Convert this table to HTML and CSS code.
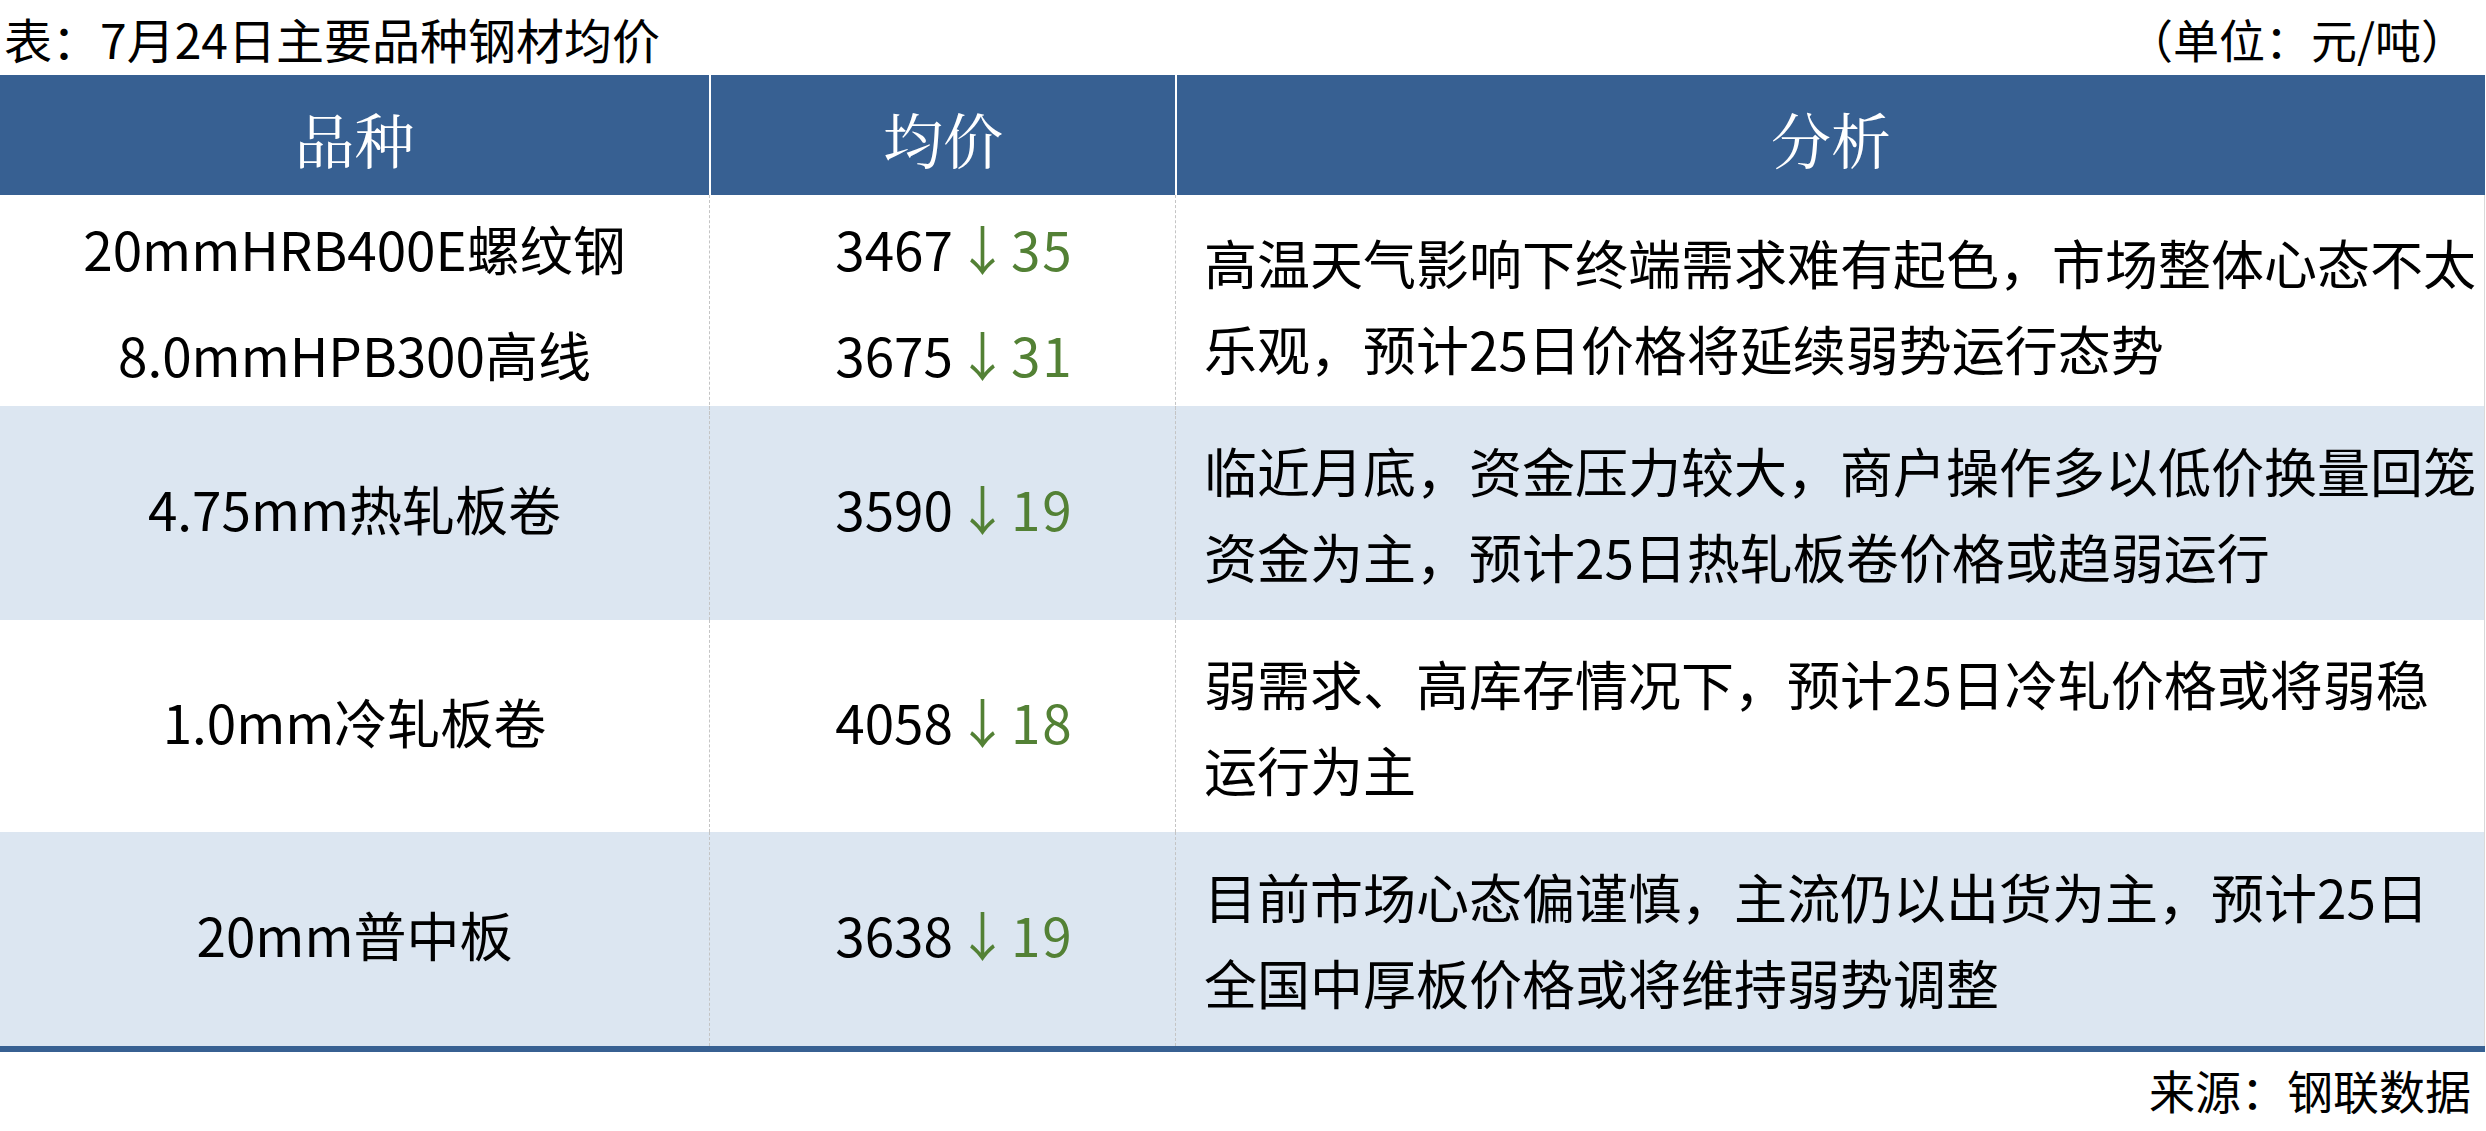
FILE: index.html
```html
<!DOCTYPE html>
<html lang="zh-CN">
<head>
<meta charset="utf-8">
<title>7月24日主要品种钢材均价</title>
<link rel="stylesheet" href="styles.css">
</head>
<body>
<div class="page">
  <div class="caption">
    <span class="caption-title">表：7月24日主要品种钢材均价</span>
    <span class="caption-unit">（单位：元/吨）</span>
  </div>
  <div class="table">
    <div class="row head">
      <div class="cell"><div class="txt">品种</div></div>
      <div class="cell"><div class="txt">均价</div></div>
      <div class="cell"><div class="txt">分析</div></div>
    </div>
    <div class="row body r1">
      <div class="cell name double"><div class="txt">20mmHRB400E螺纹钢<br>8.0mmHPB300高线</div></div>
      <div class="cell price double"><div class="txt">3467<span class="down">↓35</span><br>3675<span class="down">↓31</span></div></div>
      <div class="cell note"><div class="txt">高温天气影响下终端需求难有起色，市场整体心态不太<br>乐观，预计25日价格将延续弱势运行态势</div></div>
    </div>
    <div class="row body r2 alt">
      <div class="cell name"><div class="txt">4.75mm热轧板卷</div></div>
      <div class="cell price"><div class="txt">3590<span class="down">↓19</span></div></div>
      <div class="cell note"><div class="txt">临近月底，资金压力较大，商户操作多以低价换量回笼<br>资金为主，预计25日热轧板卷价格或趋弱运行</div></div>
    </div>
    <div class="row body r3">
      <div class="cell name"><div class="txt">1.0mm冷轧板卷</div></div>
      <div class="cell price"><div class="txt">4058<span class="down">↓18</span></div></div>
      <div class="cell note"><div class="txt">弱需求、高库存情况下，预计25日冷轧价格或将弱稳<br>运行为主</div></div>
    </div>
    <div class="row body r4 alt">
      <div class="cell name"><div class="txt">20mm普中板</div></div>
      <div class="cell price"><div class="txt">3638<span class="down">↓19</span></div></div>
      <div class="cell note"><div class="txt">目前市场心态偏谨慎，主流仍以出货为主，预计25日<br>全国中厚板价格或将维持弱势调整</div></div>
    </div>
  </div>
  <div class="source">来源：钢联数据</div>
</div>
</body>
</html>
```

FILE: styles.css
```css
html, body {
  margin: 0;
  padding: 0;
  background: #ffffff;
}

.page {
  width: 2485px;
  font-family: "Noto Sans CJK SC", "Noto Sans", sans-serif;
  color: #000000;
}

.caption {
  height: 75px;
  display: flex;
  align-items: center;
  justify-content: space-between;
  font-size: 46px;
  line-height: 1;
  padding: 0 18px 0 4px;
}

.caption-title {
  font-size: 48px;
}

.table {
  border-bottom: 6px solid #376092;
}

.row {
  display: grid;
  grid-template-columns: 709px 466px 1fr;
}

.head {
  height: 120px;
  background: #376092;
  color: #ffffff;
  font-family: "Noto Serif CJK SC", "Noto Sans CJK SC", serif;
  font-size: 60px;
}

.head .cell {
  display: flex;
  align-items: center;
  justify-content: center;
  padding-top: 6px;
  box-sizing: border-box;
}

.head .cell + .cell {
  border-left: 2px solid #ffffff;
}

.body {
  font-size: 53px;
  background: #ffffff;
}

.body.alt {
  background: #dce6f1;
}

.r1 { height: 211px; }
.r2 { height: 214px; }
.r3 { height: 212px; }
.r4 { height: 214px; }

.body .cell {
  display: flex;
  align-items: center;
  box-sizing: border-box;
}

.body .cell + .cell {
  border-left: 1px dashed #c4c4c4;
}

.name, .price {
  justify-content: center;
  text-align: center;
  line-height: 1.2;
  white-space: nowrap;
  padding-bottom: 8px;
}

.double {
  line-height: 106px;
}

.price {
  padding-left: 24px;
}

.down {
  color: #538135;
  padding-left: 3px;
  letter-spacing: 2px;
}

.note {
  padding: 0 8px 0 28px;
  line-height: 86px;
  white-space: nowrap;
  border-right: 1px solid #d9d9d9;
}

.source {
  height: 73px;
  display: flex;
  align-items: center;
  justify-content: flex-end;
  padding-right: 14px;
  font-size: 46px;
  line-height: 1;
}
```
